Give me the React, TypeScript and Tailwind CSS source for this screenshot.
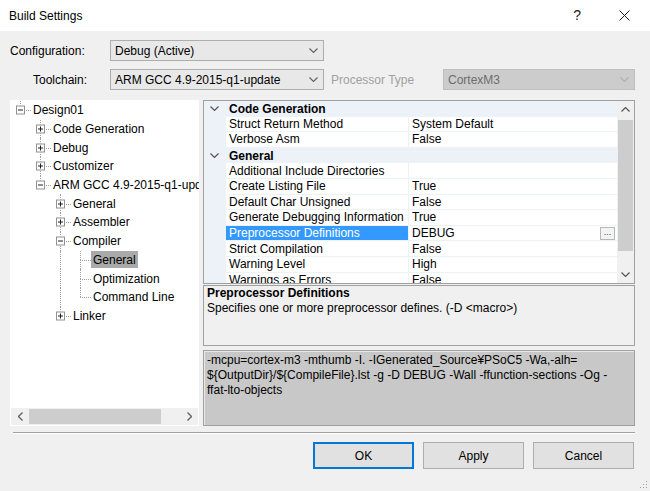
import React from 'react';

const CAT = 'bg-[#edf1f8]';

function Chev({ color = '#606060', up = false }: { color?: string; up?: boolean }) {
  return (
    <svg width="9" height="5" viewBox="0 0 9 5" className="block">
      <path d={up ? 'M0.5 4.5L4.5 0.5L8.5 4.5' : 'M0.5 0.5L4.5 4.5L8.5 0.5'} fill="none" stroke={color} strokeWidth="1.1" />
    </svg>
  );
}

function SideChev({ left }: { left?: boolean }) {
  return (
    <svg width="5" height="9" viewBox="0 0 5 9" className="block">
      <path d={left ? 'M4.5 0.5L0.5 4.5L4.5 8.5' : 'M0.5 0.5L4.5 4.5L0.5 8.5'} fill="none" stroke="#606060" strokeWidth="1.3" />
    </svg>
  );
}

type TNode = { label: string; guides: boolean[]; box?: '+' | '-'; last: boolean; selected?: boolean };

const tree: TNode[] = [
  { label: 'Design01', guides: [], box: '-', last: true },
  { label: 'Code Generation', guides: [false], box: '+', last: false },
  { label: 'Debug', guides: [false], box: '+', last: false },
  { label: 'Customizer', guides: [false], box: '+', last: false },
  { label: 'ARM GCC 4.9-2015-q1-update', guides: [false], box: '-', last: true },
  { label: 'General', guides: [false, false], box: '+', last: false },
  { label: 'Assembler', guides: [false, false], box: '+', last: false },
  { label: 'Compiler', guides: [false, false], box: '-', last: false },
  { label: 'General', guides: [false, false, true], last: false, selected: true },
  { label: 'Optimization', guides: [false, false, true], last: false },
  { label: 'Command Line', guides: [false, false, true], last: true },
  { label: 'Linker', guides: [false, false], box: '+', last: true },
];

function TreeRow({ n }: { n: TNode }) {
  return (
    <div className="flex h-[18.7px] shrink-0 items-stretch whitespace-nowrap">
      {n.guides.map((g, i) => (
        <div key={i} className="relative w-[20px] shrink-0">
          {g && <div className="absolute bottom-0 left-[10px] top-0 border-l border-dotted border-[#a0a0a0]" />}
        </div>
      ))}
      <div className="relative w-[20px] shrink-0">
        <div className="absolute left-[10px] top-0 h-1/2 border-l border-dotted border-[#a0a0a0]" />
        {!n.last && <div className="absolute bottom-0 left-[10px] top-1/2 border-l border-dotted border-[#a0a0a0]" />}
        <div className="absolute left-[10px] right-[-1px] top-1/2 border-t border-dotted border-[#a0a0a0]" />
        {n.box && (
          <div className="absolute left-[6px] top-1/2 flex h-[9px] w-[9px] -translate-y-1/2 items-center justify-center border border-[#919191] bg-white">
            <div className="relative h-[5px] w-[5px]">
              <div className="absolute left-0 top-[2px] h-[1px] w-[5px] bg-[#202020]" />
              {n.box === '+' && <div className="absolute left-[2px] top-0 h-[5px] w-[1px] bg-[#202020]" />}
            </div>
          </div>
        )}
      </div>
      <div className="flex items-center">
        <span
          className={`ml-[1px] flex h-[17px] items-center px-[2px] text-[12px] text-black ${n.selected ? 'bg-[#aaaaaa]' : ''}`}
        >
          {n.label}
        </span>
      </div>
    </div>
  );
}

type GRow = { cat?: string; name?: string; value?: string; selected?: boolean };

const rows: GRow[] = [
  { cat: 'Code Generation' },
  { name: 'Struct Return Method', value: 'System Default' },
  { name: 'Verbose Asm', value: 'False' },
  { cat: 'General' },
  { name: 'Additional Include Directories', value: '' },
  { name: 'Create Listing File', value: 'True' },
  { name: 'Default Char Unsigned', value: 'False' },
  { name: 'Generate Debugging Information', value: 'True' },
  { name: 'Preprocessor Definitions', value: 'DEBUG', selected: true },
  { name: 'Strict Compilation', value: 'False' },
  { name: 'Warning Level', value: 'High' },
  { name: 'Warnings as Errors', value: 'False' },
];

function GridRow({ r }: { r: GRow }) {
  if (r.cat) {
    return (
      <div className={`flex h-[15.6px] shrink-0 items-center ${CAT}`}>
        <div className="flex w-[22px] shrink-0 pl-[6px]">
          <Chev color="#505050" />
        </div>
        <span className="pl-[3px] text-[12px] font-bold text-black">{r.cat}</span>
      </div>
    );
  }
  return (
    <div className="flex h-[15.6px] shrink-0 items-stretch">
      <div className={`w-[22px] shrink-0 ${CAT}`} />
      <div
        className={`flex w-[182px] shrink-0 items-center overflow-hidden whitespace-nowrap border-b border-[#edf1f8] pl-[3px] text-[12px] ${
          r.selected ? 'bg-[#3399ff] text-white' : 'bg-white text-black'
        }`}
      >
        {r.name}
      </div>
      <div className="flex flex-1 items-center justify-between border-b border-l border-[#edf1f8] bg-white pl-[3px] pr-[2px] text-[12px] text-black">
        <span>{r.value}</span>
        {r.selected && (
          <div className="flex h-[13px] w-[15px] items-end justify-center border border-[#b8b8b8] bg-[#f3f3f3] pb-[2px] text-[9px] leading-none text-[#404040]">
            ...
          </div>
        )}
      </div>
    </div>
  );
}

function Combo({ text, cls, disabled }: { text: string; cls: string; disabled?: boolean }) {
  return (
    <div
      className={`flex h-[21px] items-center justify-between border pl-[4px] pr-[5px] text-[12px] ${cls} ${
        disabled ? 'border-[#bfbfbf] bg-[#cccccc] text-[#6d6d6d]' : 'border-[#adadad] bg-[#e8e8e8] text-black'
      }`}
    >
      <span>{text}</span>
      <Chev color={disabled ? '#b0b0b0' : '#606060'} />
    </div>
  );
}

export default function App() {
  return (
    <div className="relative flex h-[491px] w-[650px] flex-col overflow-hidden bg-[#f0f0f0] font-['Liberation_Sans',Arial,sans-serif] text-[12px] text-black">
      {/* Title bar */}
      <div className="flex h-[31px] shrink-0 items-center justify-between bg-white pl-[9px]">
        <span className="text-[12px]">Build Settings</span>
        <div className="flex items-center">
          <span className="mr-[38px] text-[14px] text-[#202020]">?</span>
          <svg width="11" height="11" viewBox="0 0 11 11" className="mr-[20px]">
            <path d="M0.5 0.5L10.5 10.5M10.5 0.5L0.5 10.5" stroke="#202020" strokeWidth="1" />
          </svg>
        </div>
      </div>

      {/* Configuration */}
      <div className="ml-[10px] mt-[9px] flex h-[21px] items-center">
        <div className="w-[100px]">Configuration:</div>
        <Combo text="Debug (Active)" cls="w-[214px]" />
      </div>
      {/* Toolchain */}
      <div className="ml-[10px] mt-[8px] flex h-[21px] items-center">
        <div className="w-[100px] pl-[23px]">Toolchain:</div>
        <Combo text="ARM GCC 4.9-2015-q1-update" cls="w-[214px]" />
        <div className="w-[119px] pl-[7px] text-[#a0a0a0]">Processor Type</div>
        <Combo text="CortexM3" cls="w-[192px]" disabled />
      </div>

      {/* Main */}
      <div className="ml-[10px] mt-[10px] flex h-[326px] gap-[4px]">
        {/* Tree */}
        <div className="flex w-[189px] flex-col bg-white">
          <div className="flex flex-1 flex-col overflow-hidden pt-[1px]">
            {tree.map((n, i) => (
              <TreeRow key={i} n={n} />
            ))}
          </div>
          <div className="mb-[1px] ml-[1px] flex h-[17px] w-[187px] items-center bg-[#f0f0f0]">
            <div className="flex w-[18px] justify-center">
              <SideChev left />
            </div>
            <div className="h-[15px] w-[132px] bg-[#cdcdcd]" />
            <div className="flex-1" />
            <div className="flex w-[18px] justify-center">
              <SideChev />
            </div>
          </div>
        </div>

        {/* Right column */}
        <div className="flex w-[432px] flex-col">
          <div className="flex h-[184px] border border-[#a0a0a0] bg-white">
            <div className="flex flex-1 flex-col overflow-hidden">
              {rows.map((r, i) => (
                <GridRow key={i} r={r} />
              ))}
            </div>
            <div className="flex w-[17px] flex-col bg-[#f0f0f0]">
              <div className="flex h-[17px] items-center justify-center">
                <Chev up color="#505050" />
              </div>
              <div className="mx-[1px] mt-[2px] h-[131px] bg-[#cdcdcd]" />
              <div className="flex-1" />
              <div className="flex h-[17px] items-center justify-center">
                <Chev color="#505050" />
              </div>
            </div>
          </div>
          <div className="mt-[1px] h-[61px] border border-[#a0a0a0] bg-[#f0f0f0] px-[3px] leading-[15px]">
            <div className="font-bold">Preprocessor Definitions</div>
            <div>Specifies one or more preprocessor defines. (-D &lt;macro&gt;)</div>
          </div>
          <div className="mt-[4px] h-[76px] whitespace-nowrap border border-[#a0a0a0] bg-[#c8c8c8] px-[3px] pt-[2px] leading-[15px] shadow-[inset_1px_1px_0_#e8e8e8]">
            -mcpu=cortex-m3 -mthumb -I. -IGenerated_Source¥PSoC5 -Wa,-alh=
            <br />
            ${'{'}OutputDir{'}'}/${'{'}CompileFile{'}'}.lst -g -D DEBUG -Wall -ffunction-sections -Og -
            <br />
            ffat-lto-objects
          </div>
        </div>
      </div>

      {/* Separator */}
      <div className="ml-[13px] mt-[6px] h-[2px] w-[622px] border-b border-t border-b-white border-t-[#a0a0a0]" />

      {/* Buttons */}
      <div className="mt-[8px] flex justify-end gap-[9px] pr-[16px]">
        <div className="flex h-[27px] w-[101px] items-center justify-center border-2 border-[#0078d7] bg-[#e1e1e1]">OK</div>
        <div className="flex h-[27px] w-[101px] items-center justify-center border border-[#adadad] bg-[#e1e1e1]">Apply</div>
        <div className="flex h-[27px] w-[101px] items-center justify-center border border-[#adadad] bg-[#e1e1e1]">Cancel</div>
      </div>

      {/* Resize grip */}
      <svg width="8" height="8" viewBox="0 0 8 8" className="absolute bottom-[2px] right-[2px]">
        <rect x="6" y="0" width="1" height="1" fill="#a0a0a0" />
        <rect x="3" y="3" width="1" height="1" fill="#a0a0a0" />
        <rect x="6" y="3" width="1" height="1" fill="#a0a0a0" />
        <rect x="0" y="6" width="1" height="1" fill="#a0a0a0" />
        <rect x="3" y="6" width="1" height="1" fill="#a0a0a0" />
        <rect x="6" y="6" width="1" height="1" fill="#a0a0a0" />
      </svg>
    </div>
  );
}
